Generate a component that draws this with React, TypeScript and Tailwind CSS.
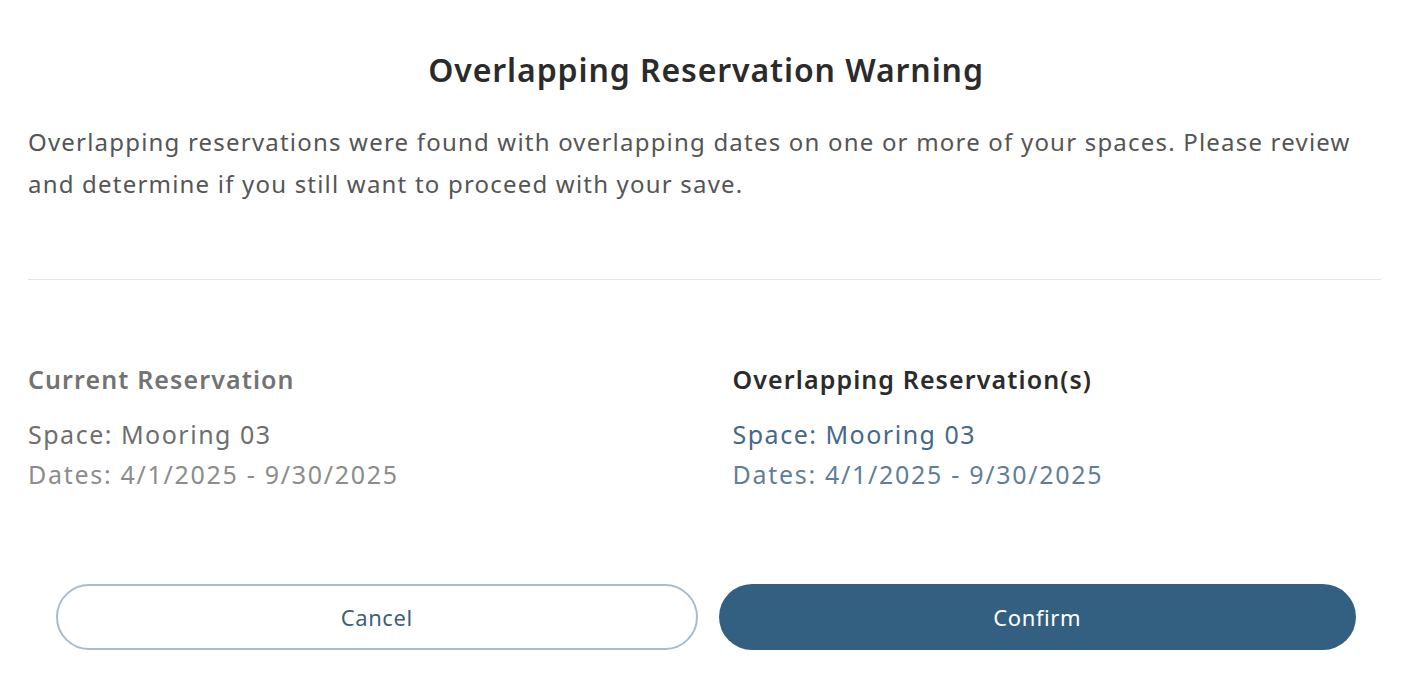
import React from 'react';

const font = { fontFamily: '"Noto Sans", "Open Sans", sans-serif' };

const OverlapWarning = () => {
  return (
    <div className="w-[1412px] h-[688px] bg-white overflow-hidden" style={font}>
      <div className="px-[28px] pt-[50px]">
        <h1 className="text-center text-[32px] leading-[40px] font-semibold tracking-[0.9px] text-[#2b2b2b]">
          Overlapping Reservation Warning
        </h1>
        <p className="mt-[31px] text-[24px] leading-[42px] tracking-[1.2px] text-[#555555] whitespace-nowrap">
          Overlapping reservations were found with overlapping dates on one or more of your spaces. Please review
          <br />
          and determine if you still want to proceed with your save.
        </p>
        <div className="mt-[74px] h-px bg-[#e4e4e4] w-[1353px]" />

        <div className="mt-[84px] grid grid-cols-2 gap-[53px]">
          <div>
            <h2 className="text-[25px] leading-[30px] font-semibold tracking-[1.1px] text-[#737373]">Current Reservation</h2>
            <div className="mt-[20px] text-[25px] leading-[40px] tracking-[1.5px]">
              <div className="text-[#6e6e6e]">Space: Mooring 03</div>
              <div className="text-[#8c8c8c] tracking-[1.7px]">Dates: 4/1/2025 - 9/30/2025</div>
            </div>
          </div>
          <div>
            <h2 className="text-[25px] leading-[30px] font-semibold tracking-[1.1px] text-[#2b2b2b]">Overlapping Reservation(s)</h2>
            <div className="mt-[20px] text-[25px] leading-[40px] tracking-[1.5px]">
              <div className="text-[#46698a]">Space: Mooring 03</div>
              <div className="text-[#5f7f99] tracking-[1.7px]">Dates: 4/1/2025 - 9/30/2025</div>
            </div>
          </div>
        </div>

        <div className="mt-[90px] px-[28px] flex gap-[21px]">
          <button className="flex-1 h-[66px] rounded-full border-2 border-[#a9bccb] bg-white text-[22px] tracking-[0.6px] text-[#3f5f7a]">
            Cancel
          </button>
          <button className="flex-1 h-[66px] rounded-full bg-[#336080] text-[22px] tracking-[0.6px] text-white">
            Confirm
          </button>
        </div>
      </div>
    </div>
  );
};

export default function App() {
  return <OverlapWarning />;
}
